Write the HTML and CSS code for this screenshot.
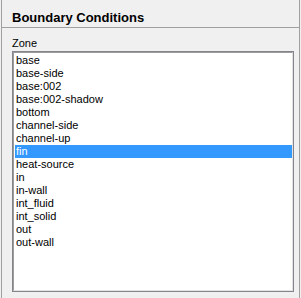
FILE: index.html
```html
<!DOCTYPE html>
<html lang="en">
<head>
    <meta charset="UTF-8">
    <title>Boundary Conditions</title>
    <link rel="stylesheet" href="styles.css">
</head>
<body>
    <div class="panel">
        <!-- Header -->
        <div class="panel-title">Boundary Conditions</div>
        <div class="panel-body">
            <label class="field-label" for="zoneList">Zone</label>
            <div class="listbox" id="zoneList">
                <div class="listbox-inner">
                    <div class="list-item">base</div>
                    <div class="list-item">base-side</div>
                    <div class="list-item">base:002</div>
                    <div class="list-item">base:002-shadow</div>
                    <div class="list-item">bottom</div>
                    <div class="list-item">channel-side</div>
                    <div class="list-item">channel-up</div>
                    <div class="list-item selected">fin</div>
                    <div class="list-item">heat-source</div>
                    <div class="list-item">in</div>
                    <div class="list-item">in-wall</div>
                    <div class="list-item">int_fluid</div>
                    <div class="list-item">int_solid</div>
                    <div class="list-item">out</div>
                    <div class="list-item">out-wall</div>
                </div>
            </div>
        </div>
    </div>
</body>
</html>
```

FILE: styles.css
```css
body {
    margin: 0;
    background: #f0f0f0;
    font-family: "Liberation Sans", Arial, sans-serif;
    font-size: 11px;
    color: #000;
}
.panel {
    margin-left: 1px;
    width: 297px;
    height: 298px;
    border-left: 1px solid #a0a0a0;
    border-right: 1px solid #a0a0a0;
}
.panel-title {
    padding: 10px 0 1px 10px;
    line-height: 16px;
    font-size: 13px;
    font-weight: bold;
    border-bottom: 1px solid #a0a0a0;
}
.panel-body {
    padding: 9px 0 0 10px;
}
.field-label {
    display: block;
    line-height: 13px;
    height: 14px;
}
.listbox {
    width: 280px;
    height: 239px;
    border: 1px solid #84848e;
}
.listbox-inner {
    height: 236px;
    padding: 1px 0 0 1px;
    border-top: 1px solid #9c9c9c;
    border-left: 1px solid #9c9c9c;
    border-right: 1px solid #e3e3e3;
    border-bottom: 1px solid #e3e3e3;
    background: #fff;
}
.list-item {
    height: 13px;
    line-height: 13px;
    padding-left: 1px;
    white-space: nowrap;
}
.list-item.selected {
    background: #3399ff;
    color: #fff;
}
```
